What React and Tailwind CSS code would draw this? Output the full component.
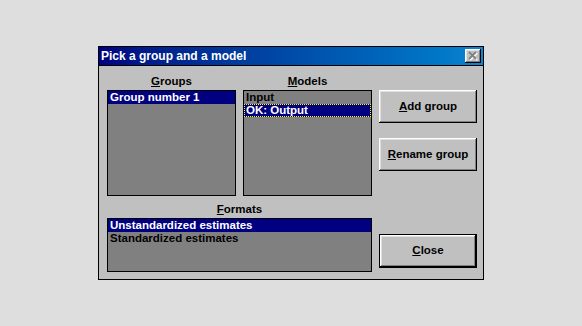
import React from 'react';

const bevel =
    'bg-[#c0c0c0] shadow-[inset_-1px_-1px_#000,inset_1px_1px_#fff,inset_-2px_-2px_#808080,inset_2px_2px_#dfdfdf]';

const Row = ({ children, selected, focused }) => (
    <div
        className={
            'h-[13px] leading-[13px] pl-[2px] whitespace-nowrap ' +
            (selected ? 'bg-[#000080] text-white ' : 'text-black ') +
            (focused ? 'outline outline-1 outline-dotted outline-[#ffff00] -outline-offset-1' : '')
        }
    >
        {children}
    </div>
);

const ListBox = ({ className, children }) => (
    <div className={'border border-black bg-[#808080] ' + className}>{children}</div>
);

const Button = ({ children, isDefault, className }) => (
    <div className={(isDefault ? 'border border-black ' : '') + className}>
        <div className={'h-full w-full flex items-center justify-center text-black ' + bevel}>{children}</div>
    </div>
);

const App = () => {
    return (
        <div className="h-[326px] w-[582px] bg-[#dedede] pt-[46px] pl-[98px] font-['Liberation_Sans',Arial,sans-serif] font-bold text-[11.5px]">
            <div className="w-[386px] h-[234px] border border-black bg-[#c0c0c0] flex flex-col">
                {/* Title bar */}
                <div className="h-[19px] border-b border-black bg-gradient-to-r from-[#000080] to-[#1084d0] flex items-center justify-between pl-[2px] pr-[2px]">
                    <span className="text-white text-[12px] leading-[18px]">Pick a group and a model</span>
                    <div className={'w-[16px] h-[14px] flex items-center justify-center ' + bevel}>
                        <svg width="11" height="10" viewBox="0 0 11 10">
                            <path d="M2 2 L9 9 M9 2 L2 9" stroke="#fff" strokeWidth="1.8" />
                            <path d="M1 1 L8 8 M8 1 L1 8" stroke="#808080" strokeWidth="1.8" />
                        </svg>
                    </div>
                </div>

                {/* Body */}
                <div className="flex pl-[8px]">
                    {/* Lists */}
                    <div className="w-[265px] flex flex-col">
                        <div className="flex gap-[7px]">
                            <div className="w-[129px] flex flex-col">
                                <div className="h-[24px] pt-[9px] leading-[12px] text-center text-black">
                                    <span className="underline underline-offset-1">G</span>roups
                                </div>
                                <ListBox className="h-[106px]">
                                    <Row selected>Group number 1</Row>
                                </ListBox>
                            </div>
                            <div className="w-[129px] flex flex-col">
                                <div className="h-[24px] pt-[9px] leading-[12px] text-center text-black">
                                    <span className="underline underline-offset-1">M</span>odels
                                </div>
                                <ListBox className="h-[106px]">
                                    <Row>Input</Row>
                                    <Row selected focused>OK: Output</Row>
                                </ListBox>
                            </div>
                        </div>
                        <div className="h-[22px] pt-[7px] leading-[12px] text-center text-black">
                            <span className="underline underline-offset-1">F</span>ormats
                        </div>
                        <ListBox className="h-[54px]">
                            <Row selected>Unstandardized estimates</Row>
                            <Row>Standardized estimates</Row>
                        </ListBox>
                    </div>

                    {/* Buttons */}
                    <div className="ml-[7px] w-[98px] flex flex-col pt-[24px]">
                        <Button className="h-[33px]">
                            <span><span className="underline underline-offset-1">A</span>dd group</span>
                        </Button>
                        <Button className="h-[33px] mt-[15px]">
                            <span><span className="underline underline-offset-1">R</span>ename group</span>
                        </Button>
                        <Button isDefault className="h-[34px] mt-[63px]">
                            <span><span className="underline underline-offset-1">C</span>lose</span>
                        </Button>
                    </div>
                </div>
            </div>
        </div>
    );
};

export default App;
